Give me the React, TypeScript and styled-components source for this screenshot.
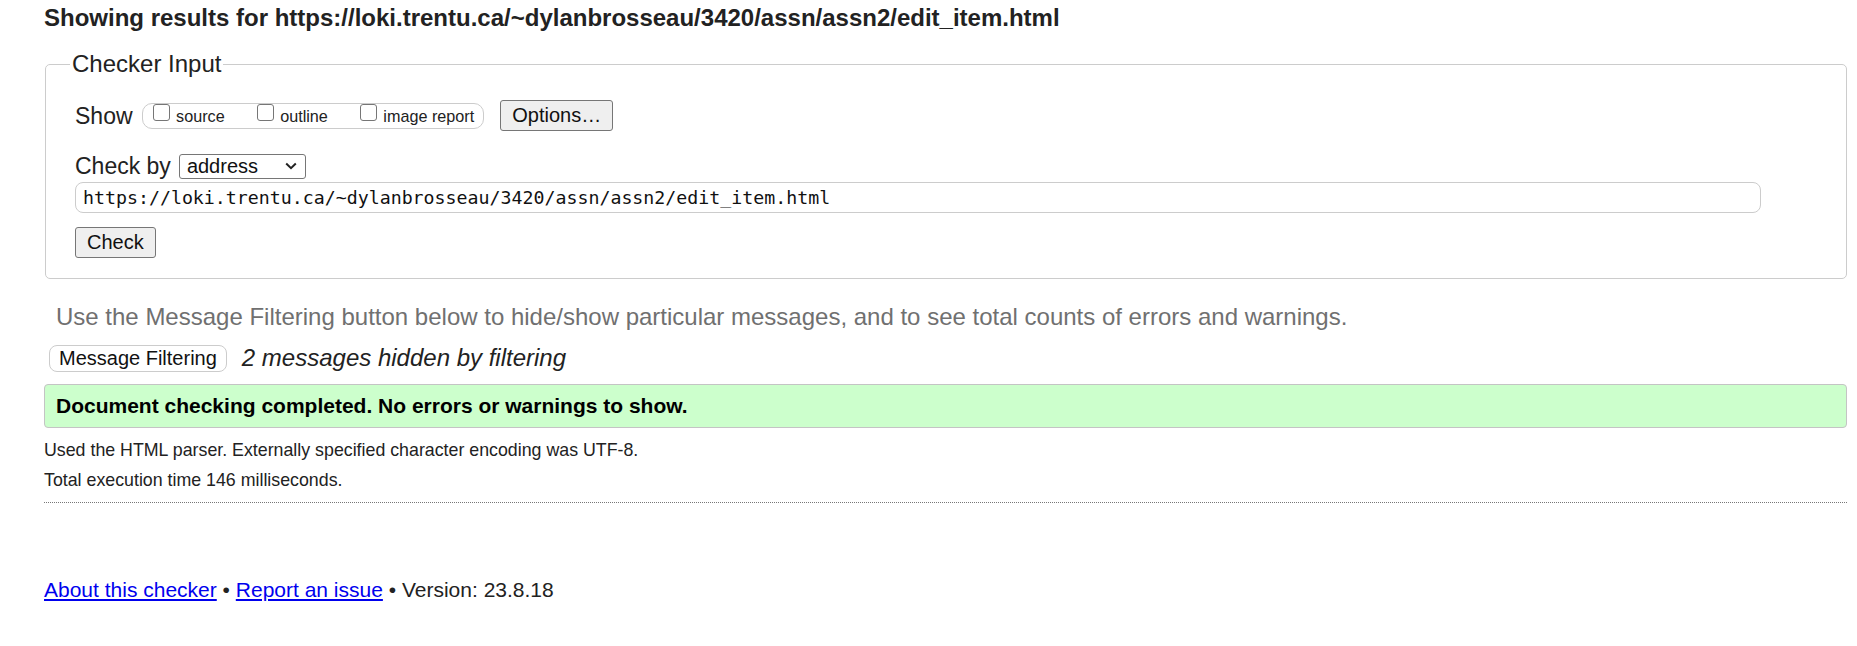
import React from 'react'
import styled, { createGlobalStyle } from 'styled-components'

const GlobalStyle = createGlobalStyle`
    html, body {
        margin: 0;
        padding: 0;
        background: #fff;
    }
    body {
        font-family: "Liberation Sans", Arial, sans-serif;
        color: #222;
    }
`

const URL = 'https://loki.trentu.ca/~dylanbrosseau/3420/assn/assn2/edit_item.html'

export default function App() {
    return (
        <>
            <GlobalStyle />
            <Page>
                <Title>Showing results for {URL}</Title>
                <Fieldset>
                    <Legend>Checker Input</Legend>
                    <Row>
                        <Label>Show</Label>
                        <OptionGroup>
                            <Option>
                                <Checkbox type="checkbox" />
                                <OptionText>source</OptionText>
                            </Option>
                            <Option>
                                <Checkbox type="checkbox" />
                                <OptionText>outline</OptionText>
                            </Option>
                            <Option>
                                <Checkbox type="checkbox" />
                                <OptionText>image report</OptionText>
                            </Option>
                        </OptionGroup>
                        <Button $gap={16}>Options…</Button>
                    </Row>
                    <Row $top={21}>
                        <Label>Check by</Label>
                        <SelectBox>
                            <span>address</span>
                            <svg width="12" height="8" viewBox="0 0 12 8">
                                <path d="M1.2 1.5l4.8 4.6 4.8-4.6" fill="none" stroke="#222" strokeWidth="2" />
                            </svg>
                        </SelectBox>
                    </Row>
                    <UrlInput type="text" defaultValue={URL} />
                    <Row $top={14}>
                        <Button>Check</Button>
                    </Row>
                </Fieldset>

                <Note>
                    Use the Message Filtering button below to hide/show particular messages, and to see total counts of errors and warnings.
                </Note>
                <FilterRow>
                    <FilterButton>Message Filtering</FilterButton>
                    <Hidden>2 messages hidden by filtering</Hidden>
                </FilterRow>

                <Success>Document checking completed. No errors or warnings to show.</Success>

                <Info $top={12}>Used the HTML parser. Externally specified character encoding was UTF-8.</Info>
                <Info $top={10}>Total execution time 146 milliseconds.</Info>
                <Rule />

                <Footer>
                    <Link href="#">About this checker</Link> • <Link href="#">Report an issue</Link> • Version: 23.8.18
                </Footer>
            </Page>
        </>
    )
}

const Page = styled.div`
    padding: 4px 10px 40px 44px;
`

const Title = styled.h2`
    margin: 0;
    font-size: 24px;
    line-height: 28px;
    font-weight: bold;
    color: #222;
`

const Fieldset = styled.fieldset`
    margin: 18px 0 0 1px;
    padding: 22px 29px 20px 29px;
    border: 1px solid #ccc;
    border-radius: 5px;
    min-width: 0;
`

const Legend = styled.legend`
    margin-left: -5px;
    padding: 0 2px;
    font-size: 24px;
    line-height: 28px;
    color: #222;
`

const Row = styled.div<{ $top?: number }>`
    display: flex;
    align-items: center;
    margin-top: ${p => p.$top ?? 0}px;
`

const Label = styled.span`
    font-size: 23px;
    line-height: 28px;
    margin-right: 9px;
`

const OptionGroup = styled.div`
    display: flex;
    align-items: flex-start;
    gap: 32px;
    box-sizing: border-box;
    height: 26px;
    padding: 0 9px 0 10px;
    border: 1px solid #ccc;
    border-radius: 10px;
`

const Option = styled.label`
    display: flex;
    align-items: flex-start;
`

const Checkbox = styled.input`
    appearance: none;
    box-sizing: border-box;
    width: 17px;
    height: 17px;
    margin: 0 6.5px 0 0;
    background: #fff;
    border: 1px solid #767676;
    border-radius: 3px;
`

const OptionText = styled.span`
    font-size: 16.2px;
    line-height: 24px;
`

const Button = styled.button<{ $gap?: number }>`
    box-sizing: border-box;
    height: 31px;
    margin-left: ${p => p.$gap ?? 0}px;
    padding: 0 11px;
    font-family: inherit;
    font-size: 20px;
    color: #111;
    background: #efefef;
    border: 1px solid #767676;
    border-radius: 3px;
`

const SelectBox = styled.div`
    display: flex;
    align-items: center;
    justify-content: space-between;
    box-sizing: border-box;
    width: 127px;
    height: 25px;
    margin-left: -1px;
    padding: 0 8px 0 7px;
    font-size: 20px;
    color: #111;
    background: #fff;
    border: 1px solid #767676;
    border-radius: 3px;
`

const UrlInput = styled.input`
    display: block;
    box-sizing: border-box;
    width: 1686px;
    height: 31px;
    margin: 2px 0 0;
    padding: 0 7px;
    font-family: "DejaVu Sans Mono", "Liberation Mono", monospace;
    font-size: 18.25px;
    color: #111;
    border: 1px solid #ccc;
    border-radius: 8px;
    outline: none;
`

const Note = styled.p`
    margin: 24px 0 0;
    padding-left: 12px;
    font-size: 24px;
    line-height: 28px;
    color: #707070;
`

const FilterRow = styled.div`
    display: flex;
    align-items: center;
    gap: 15px;
    margin: 13px 0 0 5px;
`

const FilterButton = styled.button`
    box-sizing: border-box;
    height: 27px;
    padding: 0 9px;
    font-family: inherit;
    font-size: 20px;
    color: #111;
    background: #fff;
    border: 1px solid #ccc;
    border-radius: 8px;
`

const Hidden = styled.span`
    font-size: 24px;
    font-style: italic;
    line-height: 28px;
`

const Success = styled.div`
    box-sizing: border-box;
    height: 44px;
    margin-top: 12px;
    padding: 0 11px;
    font-size: 21px;
    font-weight: bold;
    line-height: 42px;
    color: #000;
    background: #ccffcc;
    border: 1px solid #c4c4c4;
    border-radius: 4px;
`

const Info = styled.p<{ $top: number }>`
    margin: ${p => p.$top}px 0 0;
    font-size: 17.8px;
    line-height: 20px;
`

const Rule = styled.div`
    margin-top: 12px;
    border-top: 1px dotted #777;
`

const Footer = styled.p`
    margin: 75px 0 0;
    font-size: 21px;
    line-height: 24px;
    color: #222;
`

const Link = styled.a`
    color: #0000ee;
    text-decoration: underline;
`
